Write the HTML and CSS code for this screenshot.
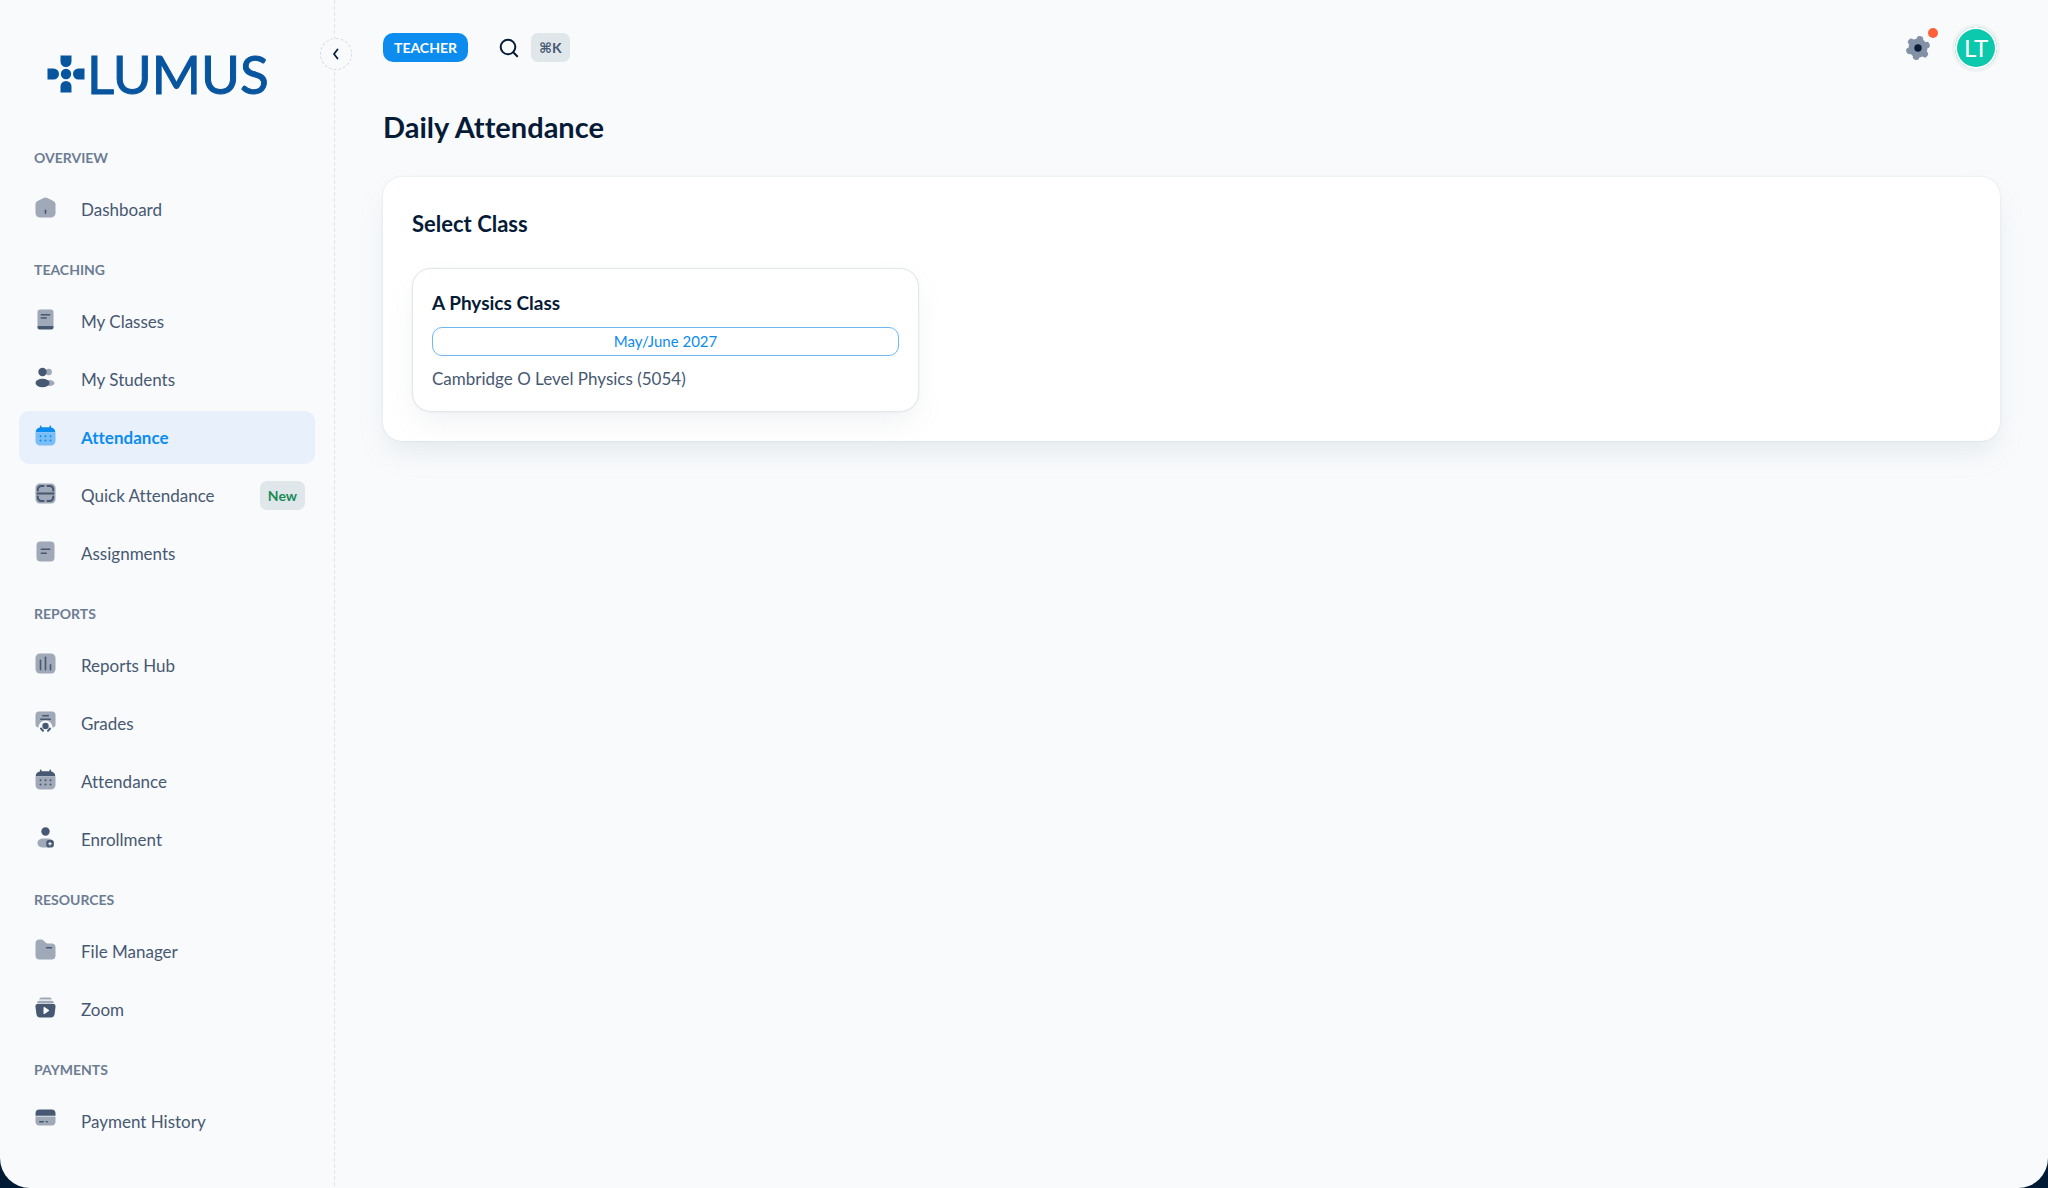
FILE: index.html
```html
<!DOCTYPE html>
<html lang="en">
<head>
<meta charset="utf-8">
<meta name="viewport" content="width=device-width, initial-scale=1">
<title>Daily Attendance</title>
<link rel="stylesheet" href="styles.css">
</head>
<body>
<svg class="sprite" aria-hidden="true">
  <symbol id="i-calendar" viewBox="0 0 21 21">
    <path class="soft" d="M0.500 7.500h20v8.500a4.500 4.500 0 0 1-4.500 4.500H5A4.500 4.500 0 0 1 .5 16z"/>
    <path d="M.7 7.200C.9 4.200 2.300 2.700 4.900 2.400V1.200a.8.8 0 0 1 1.600 0v1.100h8V1.200a.8.8 0 0 1 1.600 0v1.200c2.600.3 4 1.800 4.200 4.800z"/>
    <g><circle cx="5.500" cy="11.300" r="1"/><circle cx="10.500" cy="11.300" r="1"/><circle cx="15.500" cy="11.300" r="1"/><circle cx="5.500" cy="15.500" r="1"/><circle cx="10.500" cy="15.500" r="1"/><circle cx="15.500" cy="15.500" r="1"/></g>
  </symbol>
</svg>
<div class="app">
  <aside class="sidebar">
    <button class="collapse" type="button" aria-label="Collapse menu">
      <svg width="12" height="12" viewBox="0 0 12 12"><path d="M7.500 1.500 4 6l3.500 4.500" fill="none" stroke="currentColor" stroke-width="1.800" stroke-linecap="round" stroke-linejoin="round"/></svg>
    </button>
    <a class="logo" href="#">
      <svg width="38" height="38" viewBox="0 0 38 38" fill="currentColor" aria-hidden="true"><circle cx="19" cy="19" r="5.200"/><path d="M13.500 .5h11v6a5.500 5.500 0 0 1-11 0zM13.500 37.500h11v-6a5.500 5.500 0 0 0-11 0zM.5 13.500v11h6a5.500 5.500 0 0 0 0-11zM37.500 13.500v11h-6a5.500 5.500 0 0 1 0-11z"/></svg>
      <span>LUMUS</span>
    </a>
    <nav class="nav">
      <section>
        <h2>OVERVIEW</h2>
        <ul>
          <li><a href="#"><svg class="icon" viewBox="0 0 21 21"><path class="soft" d="M8.600.9a4 4 0 0 1 3.800 0l6 3.200c1.400.8 2.100 1.900 2.100 3.400V16a4.500 4.500 0 0 1-4.500 4.500H5A4.500 4.500 0 0 1 .5 16V7.500c0-1.500.7-2.600 2.100-3.400z"/><rect x="9.700" y="12.500" width="1.600" height="4.500" rx=".8"/></svg>Dashboard</a></li>
        </ul>
      </section>
      <section>
        <h2>TEACHING</h2>
        <ul>
          <li><a href="#"><svg class="icon" viewBox="0 0 21 21"><path class="soft" d="M5 .5h11A2.500 2.500 0 0 1 18.500 3v14h-16V3A2.500 2.500 0 0 1 5 .5z"/><path d="M2.500 17h16v1.500a2 2 0 0 1-2 2h-12a2 2 0 0 1-2-2z"/><rect x="5.500" y="5" width="10" height="1.600" rx=".8"/><rect x="5.500" y="8.200" width="6.500" height="1.600" rx=".8"/></svg>My Classes</a></li>
          <li><a href="#"><svg class="icon" viewBox="0 0 21 21"><circle class="soft" cx="13.700" cy="5" r="3.200"/><ellipse class="soft" cx="14.500" cy="16" rx="5" ry="3"/><circle cx="7.500" cy="5" r="4.200"/><ellipse cx="7.500" cy="16" rx="7" ry="4.200"/></svg>My Students</a></li>
          <li><a class="active" href="#" aria-current="page"><svg class="icon"><use href="#i-calendar"/></svg>Attendance</a></li>
          <li><a href="#"><svg class="icon" viewBox="0 0 21 21"><rect class="soft" x=".5" y=".5" width="20" height="20" rx="4.500"/><path class="line" d="M2.500 10.500h16M2.800 7.500v-1a3.500 3.500 0 0 1 3.500-3.500H8.500M12.500 3h2.200a3.500 3.500 0 0 1 3.500 3.500v1M2.800 13.500v1A3.500 3.500 0 0 0 6.300 18H8.500M12.500 18h2.200a3.500 3.500 0 0 0 3.500-3.500v-1"/></svg>Quick Attendance<span class="tag tag-new">New</span></a></li>
          <li><a href="#"><svg class="icon" viewBox="0 0 21 21"><rect class="soft" x="1.500" y=".5" width="18" height="20" rx="4"/><rect x="5.500" y="7.500" width="10" height="1.600" rx=".8"/><rect x="5.500" y="11.500" width="6.500" height="1.600" rx=".8"/></svg>Assignments</a></li>
        </ul>
      </section>
      <section>
        <h2>REPORTS</h2>
        <ul>
          <li><a href="#"><svg class="icon" viewBox="0 0 21 21"><rect class="soft" x=".5" y=".5" width="20" height="20" rx="4.500"/><rect x="4.700" y="6.500" width="1.600" height="11" rx=".8"/><rect x="9.700" y="3.500" width="1.600" height="14" rx=".8"/><rect x="14.700" y="11" width="1.600" height="6.500" rx=".8"/></svg>Reports Hub</a></li>
          <li><a href="#"><svg class="icon" viewBox="0 0 21 21"><path class="soft" d="M4 .5h13A3.500 3.500 0 0 1 20.500 4v9.500c0 1.800-1 2.800-3 3a7 7 0 0 0-14 0c-2-.2-3-1.200-3-3V4A3.500 3.500 0 0 1 4 .5z"/><rect x="7" y="4" width="7" height="1.600" rx=".8"/><rect x="5" y="7.500" width="11" height="1.600" rx=".8"/><circle class="halo" cx="10.500" cy="15" r="5"/><circle cx="10.500" cy="15" r="3.200"/><path class="line" d="m6 17.500 2 2.300M15 17.500l-2 2.300"/></svg>Grades</a></li>
          <li><a href="#"><svg class="icon"><use href="#i-calendar"/></svg>Attendance</a></li>
          <li><a href="#"><svg class="icon" viewBox="0 0 21 21"><circle cx="10.500" cy="4.500" r="4.200"/><path class="soft" d="M8.500 11.500h4c3.500 0 6 1.500 6 4.500s-2.500 4.500-6 4.500h-4c-3.500 0-6-1.500-6-4.500s2.500-4.500 6-4.500z"/><rect x="11.300" y="13" width="7.500" height="7.500" rx="2.500"/><path class="plus" d="M15 15v3.600M13.200 16.800h3.600"/></svg>Enrollment</a></li>
        </ul>
      </section>
      <section>
        <h2>RESOURCES</h2>
        <ul>
          <li><a href="#"><svg class="icon" viewBox="0 0 21 21"><path class="soft" d="M.5 4.500a4 4 0 0 1 4-4h1.300c1.200 0 2 .4 2.900 1.200l1.600 1.500c.9.900 1.700 1.300 3 1.300h3.200a4 4 0 0 1 4 4v8a4 4 0 0 1-4 4h-12a4 4 0 0 1-4-4z"/><rect x="10.800" y="8" width="6.500" height="1.600" rx=".8"/></svg>File Manager</a></li>
          <li><a href="#"><svg class="icon" viewBox="0 0 21 21"><path class="soft" d="M4.200 2.500C4.500 1.200 5.300.5 6.500.5h8c1.200 0 2 .7 2.300 2zM2 6c.3-1.500 1-2.300 2.500-2.300h12C18 3.700 18.700 4.500 19 6z"/><path fill-rule="evenodd" d="M3.500 6.700h14c2.300 0 3.300 1 3 3.200l-.9 7c-.3 2.400-1.700 3.600-4 3.600H5.400c-2.300 0-3.700-1.200-4-3.600l-.9-7c-.3-2.200.7-3.200 3-3.200zM8.500 10.600v5.800c0 .6.500.8 1 .5l4.300-2.900c.5-.3.500-.8 0-1.100l-4.300-2.800c-.5-.3-1-.1-1 .5z"/></svg>Zoom</a></li>
        </ul>
      </section>
      <section>
        <h2>PAYMENTS</h2>
        <ul>
          <li><a href="#"><svg class="icon" viewBox="0 0 21 21"><path class="soft" d="M.5 7.500h20v5a4 4 0 0 1-4 4h-12a4 4 0 0 1-4-4z"/><path d="M4.500.5h12a4 4 0 0 1 4 4v2.200H.5V4.500a4 4 0 0 1 4-4z"/><rect x="4" y="12" width="5" height="1.600" rx=".8"/><rect x="10.500" y="12" width="2.500" height="1.600" rx=".8"/></svg>Payment History</a></li>
        </ul>
      </section>
    </nav>
  </aside>
  <div class="page">
    <header class="topbar">
      <span class="role">TEACHER</span>
      <button class="search" type="button" aria-label="Search">
        <svg width="20" height="20" viewBox="0 0 20 20"><circle cx="9" cy="9" r="7.300" fill="none" stroke="currentColor" stroke-width="2"/><path d="m14.200 14.200 4 4" stroke="currentColor" stroke-width="2" stroke-linecap="round"/></svg>
        <kbd class="tag">⌘K</kbd>
      </button>
      <div class="tools">
        <button class="settings" type="button" aria-label="Settings">
          <svg width="26" height="26" viewBox="0 0 26 26"><g fill="#8291a5" transform="rotate(12 13 13)"><circle cx="13" cy="13" r="9.500"/><rect x="9.700" y=".8" width="6.600" height="24.400" rx="3"/><rect x="9.700" y=".8" width="6.600" height="24.400" rx="3" transform="rotate(60 13 13)"/><rect x="9.700" y=".8" width="6.600" height="24.400" rx="3" transform="rotate(120 13 13)"/></g><circle cx="13" cy="13" r="3.700" fill="#0a1d36"/></svg>
          <span class="dot"></span>
        </button>
        <button class="avatar" type="button" aria-label="Account">LT</button>
      </div>
    </header>
    <main class="content">
      <h1>Daily Attendance</h1>
      <section class="card">
        <h2>Select Class</h2>
        <div class="classes">
          <a class="class-card" href="#">
            <h3>A Physics Class</h3>
            <span class="session">May/June 2027</span>
            <p>Cambridge O Level Physics (5054)</p>
          </a>
        </div>
      </section>
    </main>
  </div>
</div>
</body>
</html>
```
FILE: styles.css
```css
*, *::before, *::after { box-sizing: border-box; }

:root {
  --ink: #061b36;
  --text: #475872;
  --muted: #6c7d93;
  --blue: #0c8cee;
  --paper: #f9fafc;
  --line: #dfe5e8;
}

body {
  margin: 0;
  background: #001a35;
  color: var(--text);
  font: 17px/26px Lato, "Open Sans", sans-serif;
  font-variant-ligatures: none;
}

h1, h2, h3, p, ul { margin: 0; padding: 0; }
ul { list-style: none; }
a { color: inherit; text-decoration: none; }
button { padding: 0; border: 0; background: none; color: inherit; font: inherit; cursor: pointer; }

.sprite { position: absolute; width: 0; height: 0; }

.app {
  display: flex;
  min-height: 100vh;
  background: var(--paper);
  border-radius: 0 0 30px 30px;
}

/* Sidebar */
.sidebar {
  position: relative;
  flex: 0 0 335px;
  padding: 47px 20px 20px 19px;
  background: repeating-linear-gradient(var(--line) 0 4px, transparent 4px 6px) right / 1px 100% no-repeat;
}

.collapse {
  position: absolute;
  top: 38px;
  right: -17px;
  display: grid;
  place-items: center;
  width: 32px;
  height: 32px;
  border: 1px dashed #d5dce1;
  border-radius: 50%;
  background: var(--paper);
  color: var(--ink);
}

.logo {
  display: flex;
  align-items: center;
  gap: 2px;
  height: 53px;
  padding-left: 28px;
  color: #07549f;
  font-size: 53px;
  line-height: 52px;
  -webkit-text-stroke: 1px currentColor;
  stroke-linejoin: round;
}

.nav { padding-top: 24px; }

.nav h2 {
  padding: 20px 15px 11px;
  color: var(--muted);
  font-size: 14px;
  font-weight: 700;
  line-height: 28px;
}

.nav ul { display: grid; gap: 5px; }

.nav a {
  display: flex;
  align-items: center;
  height: 53px;
  padding: 0 10px 0 16px;
  border-radius: 10px;
}

.nav a.active {
  background: #e8f0fc;
  color: var(--blue);
  font-weight: 700;
}

.icon {
  align-self: flex-start;
  width: 21px;
  height: 21px;
  margin: 14px 25px 0 0;
  fill: currentColor;
}
.soft { opacity: .5; }
.line { fill: none; stroke: currentColor; stroke-width: 2; stroke-linecap: round; }
.halo { fill: var(--paper); }
.plus { stroke: #fff; stroke-width: 1; }

.tag {
  padding: 0 8px;
  border-radius: 7px;
  background: #e0e7ea;
  color: var(--text);
  font: 700 14px/29px Lato, "DejaVu Sans", sans-serif;
}
.tag-new { margin-left: auto; color: #1a8a58; }

/* Page */
.page { flex: 1; min-width: 0; padding: 0 48px; }

.topbar {
  display: flex;
  align-items: center;
  height: 95px;
}

.role {
  padding: 0 11px;
  border-radius: 10px;
  background: var(--blue);
  color: #fff;
  font-size: 14px;
  font-weight: 700;
  line-height: 29px;
}

.search {
  display: flex;
  align-items: center;
  gap: 12px;
  margin-left: 31px;
  color: var(--ink);
}

.tools {
  display: flex;
  align-items: center;
  gap: 21px;
  margin-left: auto;
}

.settings { position: relative; display: flex; }
.dot {
  position: absolute;
  top: -7px;
  right: -7px;
  width: 10px;
  height: 10px;
  border-radius: 50%;
  background: #ff603c;
}

.avatar {
  width: 48px;
  height: 48px;
  border: 3px solid #eff1f3;
  border-radius: 50%;
  background: #0cc8ad;
  box-shadow: inset 0 0 0 2px #fff;
  color: #fff;
  font-size: 24px;
  line-height: 42px;
}

h1 {
  padding: 14px 0 32px;
  color: var(--ink);
  font-size: 29px;
  font-weight: 700;
  line-height: 36px;
}

.card {
  padding: 29px;
  border-radius: 19px;
  background: #fff;
  box-shadow: 0 0 2px rgba(145, 170, 180, .3), 0 14px 29px -5px rgba(130, 158, 168, .18);
}

.card h2 {
  margin-bottom: 26px;
  color: var(--ink);
  font-size: 22px;
  line-height: 36px;
}

.classes {
  display: grid;
  grid-template-columns: repeat(3, 1fr);
  gap: 19px;
}

.class-card {
  padding: 19px;
  border: 1px solid #e2e8ec;
  border-radius: 19px;
  background: #fff;
  box-shadow: 0 0 2px rgba(145, 158, 171, .2), 0 14px 29px -5px rgba(145, 158, 171, .14);
}

.class-card h3 {
  margin-bottom: 9px;
  color: var(--ink);
  font-size: 19px;
  line-height: 30px;
}

.session {
  display: block;
  margin-bottom: 10px;
  border: 1px solid #6db7f5;
  border-radius: 10px;
  color: var(--blue);
  font-size: 15px;
  line-height: 27px;
  text-align: center;
}
```
